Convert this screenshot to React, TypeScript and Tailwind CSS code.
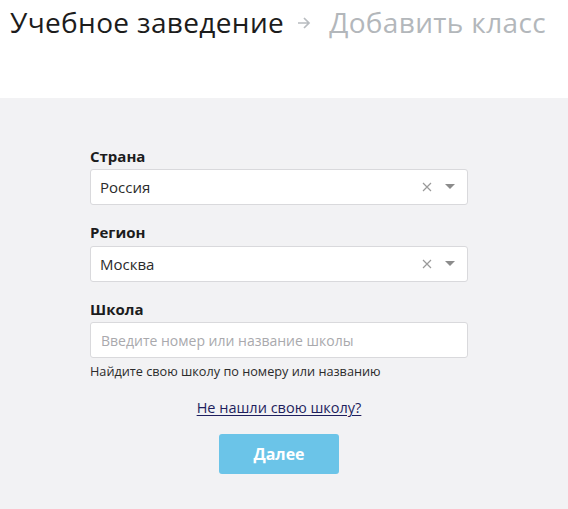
import React from 'react';

function SelectBox({ value }: { value: string }) {
  return (
    <div className="flex h-[36px] items-center rounded-[3px] border border-[#d9d9dc] bg-white pl-[9px] pr-[12px]">
      <span className="flex-1 text-[15px] text-[#2b2b2b]">{value}</span>
      <svg width="10" height="10" viewBox="0 0 10 10" className="mr-[13px]">
        <path d="M1 1L9 9M9 1L1 9" stroke="#9a9a9a" strokeWidth="1.2" />
      </svg>
      <svg width="10" height="6" viewBox="0 0 10 6">
        <path d="M0 0h10L5 5z" fill="#8c8c8c" />
      </svg>
    </div>
  );
}

export default function App() {
  return (
    <div className="h-[509px] w-[568px] overflow-hidden bg-white font-['Open_Sans',sans-serif]">
      <header className="h-[98px] bg-white pl-[10px]">
        <h1 className="flex items-center text-[28px] leading-[44px] tracking-[0.35px]">
          <span className="text-[#1c1c1c]">Учебное заведение</span>
          <svg width="14" height="14" viewBox="0 0 14 14" className="ml-[13px] mr-[18px] mt-[2px]">
            <path d="M1 7h11M7 2l5 5-5 5" stroke="#b8bcc0" strokeWidth="1.7" fill="none" />
          </svg>
          <span className="text-[#b3b7bb]">Добавить класс</span>
        </h1>
      </header>

      <main className="h-[411px] bg-[#f2f2f4] pt-[48px]">
        <div className="ml-[90px] w-[378px]">
          <label className="block text-[15px] font-bold leading-[20px] text-[#1c1c1c]">Страна</label>
          <div className="mt-[3px]">
            <SelectBox value="Россия" />
          </div>

          <label className="mt-[17px] block text-[15px] font-bold leading-[20px] text-[#1c1c1c]">Регион</label>
          <div className="mt-[4px]">
            <SelectBox value="Москва" />
          </div>

          <label className="mt-[17px] block text-[15px] font-bold leading-[20px] text-[#1c1c1c]">Школа</label>
          <div className="mt-[3px]">
            <input
              className="h-[36px] w-full rounded-[3px] border border-[#d9d9dc] bg-white px-[10px] text-[14px] outline-none placeholder:text-[#a9a9ad]"
              placeholder="Введите номер или название школы"
            />
          </div>
          <p className="mt-[5px] text-[12.7px] leading-[16px] text-[#2b2b2b]">
            Найдите свою школу по номеру или названию
          </p>

          <div className="mt-[19px] text-center text-[14px] leading-[20px]">
            <a href="#" className="text-[14.5px] text-[#1f1f5e] underline underline-offset-2">
              Не нашли свою школу?
            </a>
          </div>

          <div className="mt-[16px] flex justify-center">
            <button className="h-[40px] w-[120px] rounded-[3px] bg-[#6bc4e8] text-[16px] font-bold text-white">
              Далее
            </button>
          </div>
        </div>
      </main>
    </div>
  );
}
